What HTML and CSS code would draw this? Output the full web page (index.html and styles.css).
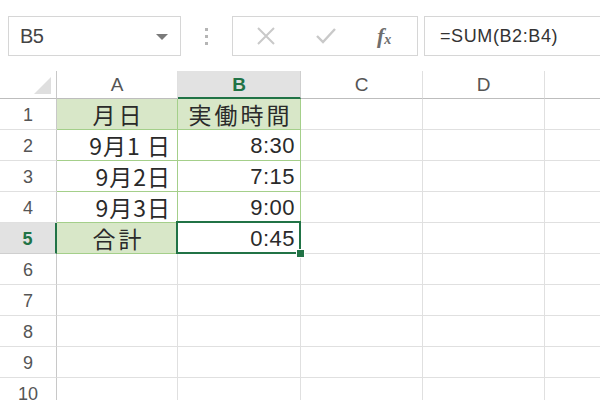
FILE: index.html
```html
<!DOCTYPE html>
<html>
<head>
<meta charset="utf-8">
<link rel="stylesheet" href="styles.css">
</head>
<body>
<div class="toolbar">
  <div class="namebox">
    <span class="name">B5</span>
    <svg class="arrow" width="12" height="6" viewBox="0 0 12 6"><path d="M0 0H12L6 6Z" fill="#7a7a7a"/></svg>
  </div>
  <div class="grip"><i></i><i></i><i></i></div>
  <div class="btnbox">
    <svg class="ico" width="20" height="20" viewBox="0 0 20 20"><path d="M2 2L18 18M18 2L2 18" stroke="#c9c9c9" stroke-width="2" fill="none"/></svg>
    <svg class="ico" width="22" height="18" viewBox="0 0 22 18"><path d="M2 9L8 15L20 2" stroke="#c9c9c9" stroke-width="2.4" fill="none"/></svg>
    <span class="fx">f<sub>x</sub></span>
  </div>
  <div class="formula">=SUM(B2:B4)</div>
</div>
<div class="sheet">
  <div class="corner"><svg width="17" height="17" viewBox="0 0 17 17"><path d="M17 0V17H0Z" fill="#dfdfdf"/></svg></div>
  <div class="ch">A</div>
  <div class="ch sel">B</div>
  <div class="ch">C</div>
  <div class="ch">D</div>
  <div class="ch last"></div>

  <div class="rh">1</div>
  <div class="c g fill ctr">月日</div>
  <div class="c g fill ctr">実働時間</div>
  <div class="c"></div><div class="c"></div><div class="c last"></div>

  <div class="rh">2</div>
  <div class="c g rt">9月1 日</div>
  <div class="c g rt num">8:30</div>
  <div class="c"></div><div class="c"></div><div class="c last"></div>

  <div class="rh">3</div>
  <div class="c g rt">9月2日</div>
  <div class="c g rt num">7:15</div>
  <div class="c"></div><div class="c"></div><div class="c last"></div>

  <div class="rh">4</div>
  <div class="c g rt">9月3日</div>
  <div class="c g rt num">9:00</div>
  <div class="c"></div><div class="c"></div><div class="c last"></div>

  <div class="rh sel">5</div>
  <div class="c g fill ctr">合計</div>
  <div class="c active rt num">0:45<span class="handle"></span></div>
  <div class="c"></div><div class="c"></div><div class="c last"></div>

  <div class="rh">6</div>
  <div class="c"></div><div class="c"></div><div class="c"></div><div class="c"></div><div class="c last"></div>
  <div class="rh">7</div>
  <div class="c"></div><div class="c"></div><div class="c"></div><div class="c"></div><div class="c last"></div>
  <div class="rh">8</div>
  <div class="c"></div><div class="c"></div><div class="c"></div><div class="c"></div><div class="c last"></div>
  <div class="rh">9</div>
  <div class="c"></div><div class="c"></div><div class="c"></div><div class="c"></div><div class="c last"></div>
  <div class="rh">10</div>
  <div class="c"></div><div class="c"></div><div class="c"></div><div class="c"></div><div class="c last"></div>
</div>
</body>
</html>
```
FILE: styles.css
```css
html, body {
  margin: 0;
  padding: 0;
  background: #fff;
  width: 600px;
  height: 400px;
  overflow: hidden;
  font-family: "Liberation Sans", Arial, sans-serif;
}
.toolbar {
  display: flex;
  align-items: center;
  height: 71px;
  padding-top: 1px;
  box-sizing: border-box;
}
.namebox {
  margin-left: 8px;
  width: 173px;
  height: 40px;
  box-sizing: border-box;
  border: 1px solid #d6d6d6;
  display: flex;
  align-items: center;
  justify-content: space-between;
  padding: 0 12px 0 11px;
}
.name {
  font-size: 20px;
  color: #444;
  letter-spacing: -0.5px;
}
.arrow { margin-top: 1px; }
.grip {
  width: 51px;
  display: flex;
  flex-direction: column;
  align-items: center;
  gap: 4px;
}
.grip i {
  display: block;
  width: 3px;
  height: 3px;
  background: #b5b5b5;
}
.btnbox {
  width: 186px;
  height: 40px;
  box-sizing: border-box;
  border: 1px solid #d6d6d6;
  display: flex;
  align-items: center;
  padding-left: 23px;
}
.btnbox .ico:nth-child(1) { margin-right: 39px; }
.btnbox .ico:nth-child(2) { margin-right: 40px; }
.fx {
  font-family: "Liberation Serif", serif;
  font-style: italic;
  font-size: 22px;
  color: #6e6e6e;
  font-weight: bold;
}
.fx sub {
  font-size: 14px;
  vertical-align: 0;
  position: relative;
  top: 1px;
}
.formula {
  margin-left: 6px;
  flex: 1;
  height: 40px;
  box-sizing: border-box;
  border: 1px solid #d6d6d6;
  border-right: none;
  display: flex;
  align-items: center;
  padding-left: 15px;
  font-size: 18px;
  color: #333;
  letter-spacing: 0.6px;
}
.sheet {
  display: grid;
  grid-template-columns: 57px 121px 123px 122px 122px 1fr;
  grid-template-rows: 28px repeat(10, 31px);
}
.sheet > div { box-sizing: border-box; }
.corner {
  border-right: 1px solid #c8c8c8;
  border-bottom: 1px solid #bdbdbd;
  display: flex;
  align-items: flex-end;
  justify-content: flex-end;
  padding: 0 5px 4px 0;
}
.corner svg { display: block; }
.ch {
  border-right: 1px solid #e0e0e0;
  border-bottom: 1px solid #bdbdbd;
  display: flex;
  align-items: center;
  justify-content: center;
  font-size: 19px;
  color: #555;
  padding-top: 1px;
}
.ch.sel {
  background: #e2e2e2;
  color: #217346;
  font-weight: bold;
  border-bottom: 2px solid #217346;
  border-right-color: #cfcfcf;
}
.rh {
  border-right: 1px solid #c8c8c8;
  border-bottom: 1px solid #e0e0e0;
  display: flex;
  align-items: center;
  justify-content: center;
  font-size: 18px;
  color: #555;
  padding-top: 2px;
}
.rh.sel {
  background: #e2e2e2;
  color: #217346;
  font-weight: bold;
  border-right: 2px solid #217346;
  border-bottom-color: #cfcfcf;
}
.c {
  border-right: 1px solid #e0e0e0;
  border-bottom: 1px solid #e0e0e0;
  display: flex;
  align-items: center;
  font-family: "Noto Sans CJK JP", "Liberation Sans", sans-serif;
  font-size: 23px;
  color: #2a2a2a;
}
.last { border-right: none; }
.c.g {
  border: 1px solid #a4cf8a;
  border-top: none;
  border-left: none;
}
.c.fill { background: #d8e7c8; }
.ctr { justify-content: center; letter-spacing: 3px; padding-left: 3px; }
.rt { justify-content: flex-end; padding-right: 6px; letter-spacing: 1px; }
.num {
  font-family: "Liberation Sans", sans-serif;
  font-size: 22px;
  letter-spacing: 0.5px;
  padding-right: 5px;
  padding-top: 2px;
}
.c.active {
  position: relative;
  z-index: 2;
  border-right: 1px solid #e0e0e0;
}
.c.active::before {
  content: "";
  position: absolute;
  left: -2px;
  top: -2px;
  right: -1px;
  bottom: -1px;
  border: 2px solid #217346;
}
.handle {
  position: absolute;
  right: -5px;
  bottom: -5px;
  width: 7px;
  height: 7px;
  background: #217346;
  border: 1px solid #fff;
}
```
